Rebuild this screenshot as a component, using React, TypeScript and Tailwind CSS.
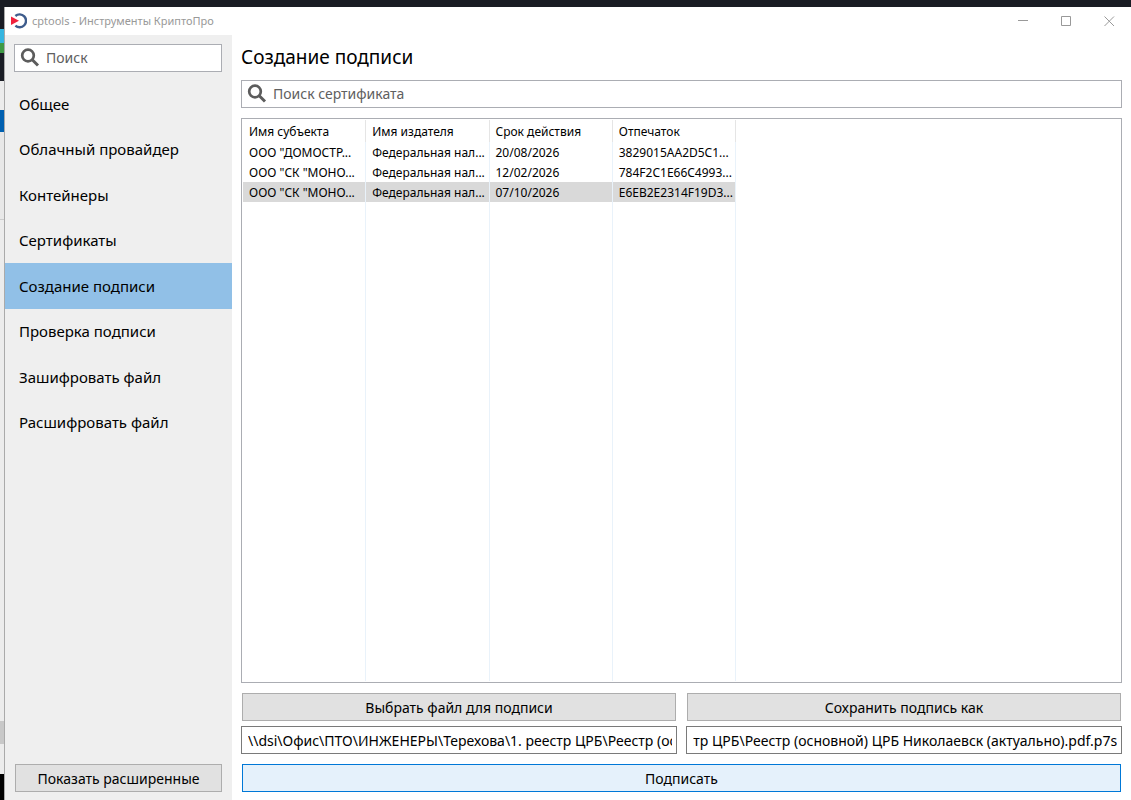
import { useLayoutEffect, useRef } from 'react';

const NAV = [
  'Общее',
  'Облачный провайдер',
  'Контейнеры',
  'Сертификаты',
  'Создание подписи',
  'Проверка подписи',
  'Зашифровать файл',
  'Расшифровать файл',
];

const COLUMNS = ['Имя субъекта', 'Имя издателя', 'Срок действия', 'Отпечаток'];

const CERTS = [
  ['ООО "ДОМОСТР...', 'Федеральная нал...', '20/08/2026', '3829015AA2D5C1...'],
  ['ООО "СК "МОНО...', 'Федеральная нал...', '12/02/2026', '784F2C1E66C4993...'],
  ['ООО "СК "МОНО...', 'Федеральная нал...', '07/10/2026', 'E6EB2E2314F19D3...'],
];

const SOURCE = '\\\\dsi\\Офис\\ПТО\\ИНЖЕНЕРЫ\\Терехова\\1. реестр ЦРБ\\Реестр (основной) ЦРБ Николаевск (актуально).pdf';

function SearchIcon() {
  return (
    <svg className="size-5 shrink-0" viewBox="0 0 20 20" fill="none" stroke="#5c5c5c" aria-hidden="true">
      <circle cx="8" cy="7.5" r="5.8" strokeWidth="2.7" />
      <path d="M12 11.5 18 17.5" strokeWidth="3" />
    </svg>
  );
}

function SearchBox({ label, className }: { label: string; className: string }) {
  return (
    <label className={`flex h-7 items-center border border-[#abadb3] bg-white pl-[5px] ${className}`}>
      <SearchIcon />
      <input
        type="text"
        aria-label={label}
        placeholder={label}
        className="min-w-0 flex-1 bg-transparent px-1.5 text-sm outline-none placeholder:text-[#606060]"
      />
    </label>
  );
}

/** Path field; `atEnd` keeps the tail of a long path in view. */
function PathField({ label, value, atEnd = false }: { label: string; value: string; atEnd?: boolean }) {
  const ref = useRef<HTMLInputElement>(null);
  useLayoutEffect(() => {
    if (atEnd && ref.current) ref.current.scrollLeft = ref.current.scrollWidth;
  }, [atEnd, value]);
  return (
    <input
      ref={ref}
      type="text"
      aria-label={label}
      defaultValue={value}
      className="h-7 w-full min-w-0 border border-[#7a7a7a] bg-white pr-1 pl-1.5 text-sm outline-none"
    />
  );
}

function TitleBar() {
  return (
    <header className="flex h-7 shrink-0 items-center bg-white pl-1.5 text-[#999]">
      <svg className="size-4 shrink-0" viewBox="0 0 16 16" aria-hidden="true">
        <path d="M4.4 3A6.4 6.4 0 1 1 4.4 12.6" fill="none" stroke="#3e5c8c" strokeWidth="2.4" />
        <path d="M0 3.6 8 7.8 0 12Z" fill="#f0213c" />
      </svg>
      <h1 className="ml-[5px] flex-1 text-[11px]">cptools - Инструменты КриптоПро</h1>
      <div className="flex">
        <button type="button" aria-label="Свернуть" className="flex h-7 w-[43px] items-center justify-center">
          <svg className="size-[11px]" viewBox="0 0 11 11" stroke="currentColor"><path d="M0 4.5H10" /></svg>
        </button>
        <button type="button" aria-label="Развернуть" className="flex h-7 w-[43px] items-center justify-center">
          <svg className="size-[11px]" viewBox="0 0 11 11" fill="none" stroke="currentColor"><path d="M.5.5h9v9h-9z" /></svg>
        </button>
        <button type="button" aria-label="Закрыть" className="flex h-7 w-[43px] items-center justify-center">
          <svg className="size-[11px]" viewBox="0 0 11 11" stroke="currentColor"><path d="M.5.5 10 10M10 .5.5 10" /></svg>
        </button>
      </div>
    </header>
  );
}

function Sidebar() {
  return (
    <aside className="flex w-[227px] shrink-0 flex-col bg-[#efefef] pt-[9px] pb-2">
      <SearchBox label="Поиск" className="mr-2.5 ml-[9px]" />
      <nav className="mt-[9px]">
        <ul className="grid h-[364px] grid-rows-8">
          {NAV.map((item) => (
            <li key={item} className={item === 'Создание подписи' ? 'bg-[#91c0e7]' : ''}>
              <a href="#" className="flex h-full items-center pl-3.5 text-[15px]">{item}</a>
            </li>
          ))}
        </ul>
      </nav>
      <button type="button" className="mx-2.5 mt-auto h-7 border border-[#adadad] bg-[#e1e1e1] pt-px text-sm">
        Показать расширенные
      </button>
    </aside>
  );
}

function CertTable() {
  return (
    <div className="min-h-0 flex-1 border border-[#abadb3] p-px">
      <table className="h-full w-[493px] table-fixed border-separate border-spacing-0 text-left text-[12px]">
        <thead>
          <tr className="h-[22px]">
            {COLUMNS.map((c) => (
              <th key={c} className="border-r border-[#e5e5e5] px-1.5 pt-0.5 pb-0 font-normal whitespace-nowrap">{c}</th>
            ))}
          </tr>
        </thead>
        <tbody>
          {CERTS.map((cells, i) => (
            <tr key={i} className={i === 2 ? 'h-5 bg-[#d9d9d9]' : 'h-5'}>
              {cells.map((cell, j) => (
                <td key={j} className="overflow-hidden border-r border-[#e9f2fa] pt-0.5 pr-0 pb-0 pl-1.5 whitespace-nowrap">{cell}</td>
              ))}
            </tr>
          ))}
          <tr aria-hidden="true">
            {COLUMNS.map((c) => (
              <td key={c} className="border-r border-[#e9f2fa]" />
            ))}
          </tr>
        </tbody>
      </table>
    </div>
  );
}

export default function App() {
  return (
    <div className="flex h-screen flex-col bg-[#191c24] font-['Noto_Sans','Open_Sans',sans-serif] text-black">
      <div className="h-[7px] shrink-0 bg-[#191c24]" />
      <div className="flex min-h-0 flex-1">
        <div className="flex w-[5px] shrink-0 flex-col border-r border-[#aaa]">
          <div className="h-[22px] bg-[#191c24]" />
          <div className="h-[14px] bg-[#35b5e0]" />
          <div className="h-[10px] bg-[#3f9a45]" />
          <div className="h-[28px] bg-[#191c24]" />
          <div className="h-[29px] bg-[#ececec]" />
          <div className="h-[22px] bg-[#0060b0]" />
          <div className="h-[87px] bg-[#e8e8e8]" />
          <div className="flex-1 border-t border-[#ccc] bg-[#ececec]" />
          <div className="h-[23px] bg-[#c8c8c8]" />
          <div className="h-[30px] bg-[#ececec]" />
          <div className="h-[26px] bg-black" />
        </div>
        <div className="flex min-w-0 flex-1 flex-col bg-white">
          <TitleBar />
          <div className="flex min-h-0 flex-1">
            <Sidebar />
            <main className="flex min-w-0 flex-1 flex-col pt-2 pr-[9px] pb-2 pl-[9px]">
              <h2 className="text-[19px] leading-7">Создание подписи</h2>
              <SearchBox label="Поиск сертификата" className="mt-[9px] mb-2.5 shrink-0" />
              <CertTable />
              <div className="mt-2.5 grid grid-cols-2 gap-x-[9px] gap-y-[5px]">
                <button type="button" className="mx-px h-7 border border-[#adadad] bg-[#e1e1e1] pt-px text-sm">
                  Выбрать файл для подписи
                </button>
                <button type="button" className="mx-px h-7 border border-[#adadad] bg-[#e1e1e1] pt-px text-sm">
                  Сохранить подпись как
                </button>
                <PathField label="Файл для подписи" value={SOURCE} />
                <PathField label="Файл подписи" value={`${SOURCE}.p7s`} atEnd />
              </div>
              <button type="button" className="mx-px mt-2.5 h-7 border border-[#0078d7] bg-[#e5f1fb] pt-px text-sm">
                Подписать
              </button>
            </main>
          </div>
        </div>
      </div>
    </div>
  );
}
